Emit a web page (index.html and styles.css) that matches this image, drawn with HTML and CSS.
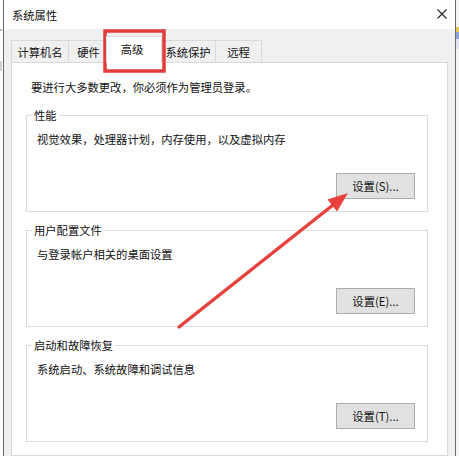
FILE: index.html
```html
<!DOCTYPE html>
<html lang="zh">
<head>
<meta charset="utf-8">
<title>系统属性</title>
<link rel="stylesheet" href="styles.css">
</head>
<body>
<div class="desktop">
  <div class="edge-left"><span class="frag f1"></span><span class="frag f2"></span></div>
  <div class="window">
    <div class="titlebar">
      <span class="title">系统属性</span>
      <span class="close"><svg width="10" height="10" viewBox="0 0 10 10"><path d="M0.5 0.5 L9.5 9.5 M9.5 0.5 L0.5 9.5" stroke="#222" stroke-width="1.1" fill="none"/></svg></span>
    </div>
    <div class="client">
      <div class="tabs">
        <div class="tab t1">计算机名</div>
        <div class="tab t2">硬件</div>
        <div class="tab sel">高级</div>
        <div class="tab t4">系统保护</div>
        <div class="tab t5">远程</div>
      </div>
      <div class="panel">
        <p class="note">要进行大多数更改，你必须作为管理员登录。</p>
        <div class="group">
          <span class="legend">性能</span>
          <p class="desc">视觉效果，处理器计划，内存使用，以及虚拟内存</p>
          <button class="btn">设置(S)...</button>
        </div>
        <div class="group">
          <span class="legend">用户配置文件</span>
          <p class="desc">与登录帐户相关的桌面设置</p>
          <button class="btn">设置(E)...</button>
        </div>
        <div class="group">
          <span class="legend">启动和故障恢复</span>
          <p class="desc">系统启动、系统故障和调试信息</p>
          <button class="btn">设置(T)...</button>
        </div>
      </div>
    </div>
  </div>
  <div class="edge-right"><span class="c1"></span><span class="c2"></span><span class="c3"></span></div>
  <svg class="annot" width="459" height="456" viewBox="0 0 459 456">
    <rect x="105" y="31" width="59" height="40" fill="none" stroke="#e23b3b" stroke-width="3.5"/>
    <line x1="179" y1="327" x2="333" y2="205" stroke="#e8403b" stroke-width="3.5" stroke-linecap="round"/>
    <polygon points="348,193 337,211.5 327.5,199.5" fill="#e8403b"/>
  </svg>
</div>
</body>
</html>
```
FILE: styles.css
```css
html, body {
  margin: 0;
  padding: 0;
}
body {
  font-family: "Noto Sans CJK SC", "Noto Sans", "Liberation Sans", sans-serif;
  font-size: 11.3px;
  color: #111;
}
.desktop {
  position: relative;
  width: 459px;
  height: 456px;
  overflow: hidden;
  display: flex;
  background: #fff;
}
.edge-left {
  width: 3px;
  flex: none;
  display: flex;
  flex-direction: column;
}
.frag {
  display: block;
  width: 2px;
  background: #b8b8b8;
}
.f1 { height: 2px; margin-top: 29px; }
.f2 { height: 10px; margin-top: 30px; background: #cfcfcf; }
.edge-right {
  width: 3px;
  flex: none;
  display: flex;
  flex-direction: column;
  background: #f4f4f4;
}
.c1 { display: block; height: 5px; margin-top: 27px; background: #e7c75a; }
.c2 { display: block; height: 7px; background: #8ea4d6; }
.c3 { display: block; height: 10px; background: #dfe4ee; }
.window {
  width: 451px;
  flex: none;
  border-left: 1px solid #6a6a6a;
  border-right: 1px solid #6a6a6a;
  display: flex;
  flex-direction: column;
  background: #f0f0f0;
}
.titlebar {
  height: 29px;
  flex: none;
  background: #fff;
  display: flex;
  align-items: center;
  justify-content: space-between;
  padding: 0 8px;
}
.title {
  font-size: 11.3px;
  line-height: 16px;
  margin-top: 1px;
}
.close {
  display: flex;
  width: 10px;
  height: 10px;
  margin-top: -1px;
}
.client {
  flex: 1;
  padding: 0 7px;
  display: flex;
  flex-direction: column;
}
.tabs {
  height: 33px;
  flex: none;
  display: flex;
  align-items: flex-end;
}
.tab {
  box-sizing: border-box;
  height: 22px;
  border: 1px solid #d9d9d9;
  border-bottom: none;
  border-right: none;
  background: #f0f0f0;
  display: flex;
  align-items: center;
  justify-content: center;
  line-height: 16px;
  padding-top: 1px;
}
.t1 { width: 57px; }
.t2 { width: 40px; }
.t4 { width: 55px; }
.t5 { width: 47px; border-right: 1px solid #d9d9d9; }
.tab.sel {
  width: 56px;
  height: 27px;
  margin: 0 -2px -1px;
  position: relative;
  z-index: 1;
  background: #fff;
  border-right: 1px solid #d9d9d9;
  padding-top: 0;
  padding-bottom: 3px;
  padding-right: 4px;
}
.panel {
  flex: 1;
  background: #fff;
  border: 1px solid #d9d9d9;
  padding: 16px 19px 0 14px;
}
.note {
  margin: 0 0 0 5px;
  line-height: 16px;
}
.group {
  box-sizing: border-box;
  height: 97px;
  margin-top: 20px;
  border: 1px solid #dcdcdc;
  padding: 0 12px 12px 10px;
  display: flex;
  flex-direction: column;
}
.group + .group {
  margin-top: 18px;
}
.legend {
  align-self: flex-start;
  margin: -9px 0 0 -5px;
  padding: 0 2px;
  background: #fff;
  line-height: 16px;
}
.desc {
  margin: 8px 0 0;
  line-height: 16px;
}
.btn {
  margin-top: auto;
  align-self: flex-end;
  width: 79px;
  height: 26px;
  box-sizing: border-box;
  border: 1px solid #adadad;
  background: #e1e1e1;
  font-family: inherit;
  font-size: 11.3px;
  color: #111;
  padding: 0;
  line-height: 16px;
}
.annot {
  position: absolute;
  left: 0;
  top: 0;
  pointer-events: none;
}
```
